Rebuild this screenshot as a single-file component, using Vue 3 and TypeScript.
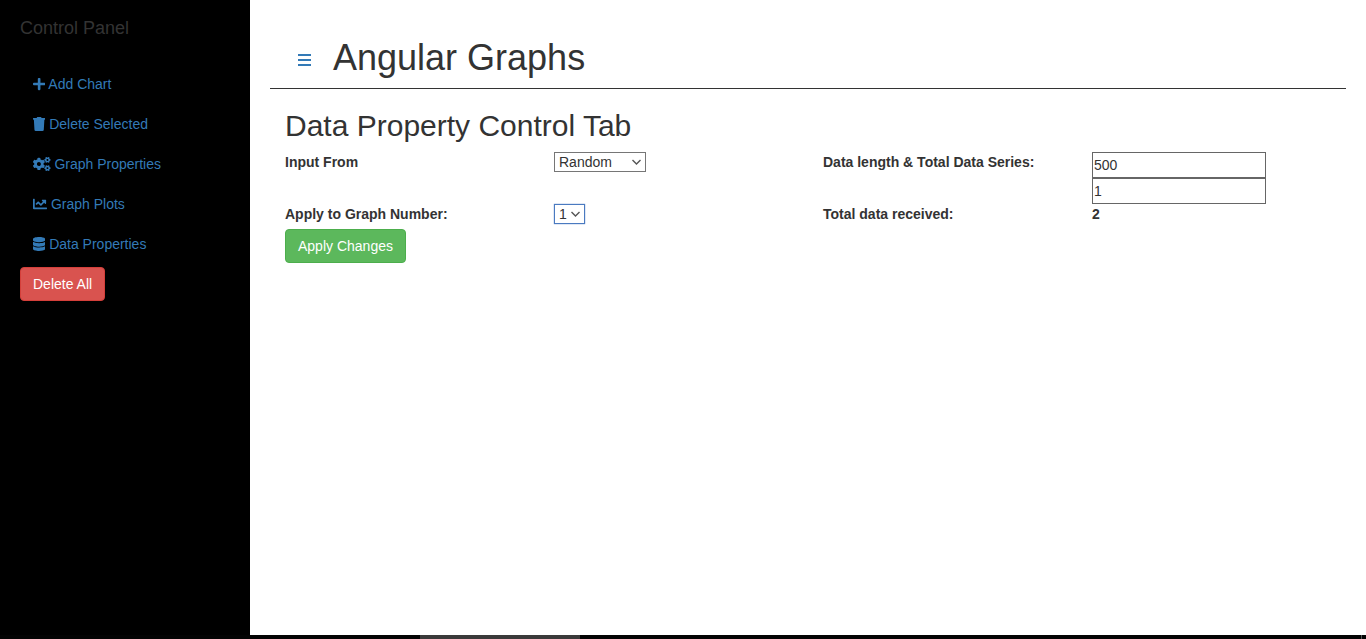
<script setup lang="ts">
import { ref } from 'vue'

interface NavItem {
  label: string
  width: number
  paths: string[]
  icon: string
}

const smallGear =
  'M512.1 191l-8.2 14.3c-3 5.3-9.4 7.5-15.1 5.4-11.8-4.4-22.6-10.7-32.1-18.6-4.6-3.8-5.8-10.5-2.8-15.7l8.2-14.3c-6.9-8-12.3-17.3-15.9-27.4h-16.5c-6 0-11.2-4.3-12.2-10.3-2-12-2.1-24.6 0-37.1 1-6 6.2-10.4 12.2-10.4h16.5c3.6-10.1 9-19.4 15.9-27.4l-8.2-14.3c-3-5.2-1.9-11.9 2.8-15.7 9.5-7.9 20.4-14.2 32.1-18.6 5.7-2.1 12.1.1 15.1 5.4l8.2 14.3c10.5-1.9 21.2-1.9 31.7 0L552 6.3c3-5.3 9.4-7.5 15.1-5.4 11.8 4.4 22.6 10.7 32.1 18.6 4.6 3.8 5.8 10.5 2.8 15.7l-8.2 14.3c6.9 8 12.3 17.3 15.9 27.4h16.5c6 0 11.2 4.3 12.2 10.3 2 12 2.1 24.6 0 37.1-1 6-6.2 10.4-12.2 10.4h-16.5c-3.6 10.1-9 19.4-15.9 27.4l8.2 14.3c3 5.2 1.9 11.9-2.8 15.7-9.5 7.9-20.4 14.2-32.1 18.6-5.7 2.1-12.1-.1-15.1-5.4l-8.2-14.3c-10.4 1.9-21.2 1.9-31.7 0zm-10.5-58.8c38.5 29.6 82.4-14.3 52.8-52.8-38.5-29.7-82.4 14.3-52.8 52.8z'
const largeGear =
  'M386.3 286.1l33.7 16.8c10.1 5.8 14.5 18.1 10.5 29.1-8.9 24.2-26.4 46.4-42.6 65.8-7.4 8.9-20.2 11.1-30.3 5.3l-29.1-16.8c-16 13.7-34.6 24.6-54.9 31.7v33.6c0 11.6-8.3 21.6-19.7 23.6-24.6 4.2-50.4 4.4-75.9 0-11.5-2-20-11.9-20-23.6V418c-20.3-7.2-38.9-18-54.9-31.7L74 403c-10 5.8-22.9 3.6-30.3-5.3-16.2-19.4-33.3-41.6-42.2-65.7-4-10.9.4-23.2 10.5-29.1l33.3-16.8c-3.9-20.9-3.9-42.4 0-63.4L12 205.8c-10.1-5.8-14.6-18.1-10.5-29 8.9-24.2 26-46.4 42.2-65.8 7.4-8.9 20.2-11.1 30.3-5.3l29.1 16.8c16-13.7 34.6-24.6 54.9-31.7V57.1c0-11.5 8.2-21.5 19.6-23.5 24.6-4.2 50.5-4.4 76-.1 11.5 2 20 11.9 20 23.6v33.6c20.3 7.2 38.9 18 54.9 31.7l29.1-16.8c10-5.8 22.9-3.6 30.3 5.3 16.2 19.4 33.2 41.6 42.1 65.8 4 10.9.1 23.2-10 29.1l-33.7 16.8c3.9 21 3.9 42.5 0 63.5zm-117.6 21.1c59.2-77-28.7-164.9-105.7-105.7-59.2 77 28.7 164.9 105.7 105.7z'

const navItems: NavItem[] = [
  {
    label: 'Add Chart',
    icon: 'plus',
    width: 448,
    paths: [
      'M416 208H272V64c0-17.67-14.33-32-32-32h-32c-17.67 0-32 14.33-32 32v144H32c-17.67 0-32 14.33-32 32v32c0 17.67 14.33 32 32 32h144v144c0 17.67 14.33 32 32 32h32c17.67 0 32-14.33 32-32V304h144c17.67 0 32-14.33 32-32v-32c0-17.67-14.33-32-32-32z',
    ],
  },
  {
    label: 'Delete Selected',
    icon: 'trash',
    width: 448,
    paths: [
      'M432 32H312l-9.4-18.7A24 24 0 0 0 281.1 0H166.8a23.72 23.72 0 0 0-21.4 13.3L136 32H16A16 16 0 0 0 0 48v32a16 16 0 0 0 16 16h416a16 16 0 0 0 16-16V48a16 16 0 0 0-16-16zM53.2 467a48 48 0 0 0 47.9 45h245.8a48 48 0 0 0 47.9-45L416 96H32z',
    ],
  },
  { label: 'Graph Properties', icon: 'cogs', width: 640, paths: [largeGear, smallGear] },
  {
    label: 'Graph Plots',
    icon: 'chart',
    width: 512,
    paths: [
      'M496 384H64V80c0-8.84-7.16-16-16-16H16C7.16 64 0 71.16 0 80v336c0 17.67 14.33 32 32 32h464c8.84 0 16-7.16 16-16v-32c0-8.84-7.16-16-16-16zM464 96H345.94c-21.38 0-32.09 25.85-16.97 40.97l32.4 32.4L288 242.75l-73.37-73.37c-12.5-12.5-32.76-12.5-45.25 0l-68.69 68.69c-6.25 6.25-6.25 16.38 0 22.63l22.62 22.62c6.25 6.25 16.38 6.25 22.63 0L192 237.25l73.37 73.37c12.5 12.5 32.76 12.5 45.25 0l96-96 32.4 32.4c15.12 15.12 40.97 4.41 40.97-16.97V112c.01-8.84-7.15-16-15.99-16z',
    ],
  },
  {
    label: 'Data Properties',
    icon: 'database',
    width: 448,
    paths: [
      'M448 73.143v45.714C448 159.143 347.667 192 224 192S0 159.143 0 118.857V73.143C0 32.857 100.333 0 224 0s224 32.857 224 73.143zM448 176v102.857C448 319.143 347.667 352 224 352S0 319.143 0 278.857V176c48.125 33.143 136.208 48.572 224 48.572S399.874 209.143 448 176zm0 160v102.857C448 479.143 347.667 512 224 512S0 479.143 0 438.857V336c48.125 33.143 136.208 48.572 224 48.572S399.874 369.143 448 336z',
    ],
  },
]

const source = ref('Random')
const graphNumber = ref('1')
const dataLength = ref('500')
const seriesCount = ref('1')
const received = ref(2)
</script>

<template>
  <div class="page">
    <div class="body">
      <aside class="sidebar">
        <h4 class="panel-title">Control Panel</h4>
        <nav class="nav">
          <a v-for="item in navItems" :key="item.icon" class="nav-link" href="#">
            <svg class="icon" :class="item.icon" :viewBox="`0 0 ${item.width} 512`" aria-hidden="true">
              <path v-for="d in item.paths" :key="d" :d="d" />
              <path v-if="item.icon === 'cogs'" :d="smallGear" transform="translate(0 301)" />
            </svg>
            {{ item.label }}
          </a>
        </nav>
        <button class="btn danger" type="button">Delete All</button>
      </aside>

      <main class="content">
        <header class="header">
          <button class="menu" type="button" aria-label="Toggle menu">
            <svg class="bars" viewBox="0 0 13 12" aria-hidden="true">
              <path d="M0 1h13M0 6h13M0 11h13" />
            </svg>
          </button>
          <h1>Angular Graphs</h1>
        </header>

        <form class="form" @submit.prevent>
          <h2>Data Property Control Tab</h2>
          <div class="fields">
            <label for="source">Input From</label>
            <div>
              <span class="select-box">
                <select id="source" v-model="source" class="wide">
                  <option>Random</option>
                </select>
                <svg class="chevron" viewBox="0 0 9 6" aria-hidden="true"><path d="M.5 1l4 4 4-4" /></svg>
              </span>
            </div>
            <label for="length">Data length &amp; Total Data Series:</label>
            <div class="stack">
              <input id="length" v-model="dataLength" type="text" />
              <input v-model="seriesCount" type="text" aria-label="Total data series" />
            </div>
            <label for="graph">Apply to Graph Number:</label>
            <div>
              <span class="select-box">
                <select id="graph" v-model="graphNumber" class="narrow">
                  <option>1</option>
                </select>
                <svg class="chevron" viewBox="0 0 9 6" aria-hidden="true"><path d="M.5 1l4 4 4-4" /></svg>
              </span>
            </div>
            <label for="received">Total data received:</label>
            <output id="received">{{ received }}</output>
          </div>
          <button class="btn success" type="submit">Apply Changes</button>
        </form>
      </main>
    </div>
    <div class="strip"><span class="thumb"></span><span class="tick"></span></div>
  </div>
</template>

<style>
body {
  margin: 0;
  background: #fff;
}
</style>

<style scoped>
* {
  box-sizing: border-box;
}
.page {
  display: flex;
  flex-direction: column;
  min-height: 100vh;
  font-family: "Liberation Sans", Arial, sans-serif;
  font-size: 14px;
  line-height: 20px;
  color: #333;
}
.body {
  flex: 1;
  display: flex;
}
.sidebar {
  flex: 0 0 250px;
  padding: 18px 20px;
  background: #000;
}
h1,
h2,
h4 {
  margin: 0;
  font-weight: 400;
}
.panel-title {
  margin-bottom: 26px;
  font-size: 18px;
  line-height: 20px;
}
.nav {
  display: flex;
  flex-direction: column;
}
.nav-link {
  padding: 10px 13px;
  color: #337ab7;
  text-decoration: none;
}
.icon {
  height: 14px;
  vertical-align: -2px;
  fill: currentColor;
}
.btn {
  display: block;
  padding: 6px 12px;
  border: 1px solid;
  border-radius: 4px;
  font: inherit;
  color: #fff;
}
.danger {
  margin-top: 3px;
  background: #d9534f;
  border-color: #d43f3a;
}
.success {
  background: #5cb85c;
  border-color: #4cae4c;
}
.content {
  flex: 1;
  min-width: 0;
  padding: 38px 20px 20px;
}
.header {
  display: flex;
  align-items: center;
  gap: 9px;
  padding: 0 15px 10px;
  border-bottom: 1px solid #333;
}
.menu {
  display: flex;
  padding: 16px 13px 12px;
  border: 0;
  background: none;
  color: #337ab7;
}
.bars {
  width: 13px;
  height: 12px;
  fill: none;
  stroke: currentColor;
  stroke-width: 2;
}
h1 {
  font-size: 36px;
  line-height: 40px;
}
.form {
  padding-top: 20px;
}
h2 {
  margin: 0 15px 10px;
  font-size: 30px;
  line-height: 33px;
}
.fields {
  display: grid;
  grid-template-columns: repeat(4, 1fr);
}
.fields > * {
  padding: 0 15px;
}
label,
output {
  font-weight: 700;
}
.form > .btn {
  margin: 5px 15px 0;
}
.select-box {
  position: relative;
  display: inline-flex;
  vertical-align: top;
}
select {
  appearance: none;
  height: 20px;
  padding: 0 4px;
  border: 1px solid #767676;
  border-radius: 0;
  outline: 0;
  background: #fff;
  font: inherit;
  line-height: 18px;
  color: #333;
}
.wide {
  width: 92px;
}
.narrow {
  width: 31px;
  border-color: #4a7ac0;
  box-shadow: 0 0 1px #4a7ac0;
}
.chevron {
  position: absolute;
  right: 5px;
  top: 7px;
  width: 9px;
  height: 6px;
  fill: none;
  stroke: #555;
  stroke-width: 1.4;
  pointer-events: none;
}
.stack {
  display: flex;
  flex-direction: column;
}
input {
  width: 174px;
  max-width: 100%;
  height: 26px;
  padding: 1px;
  border: 1px solid #666;
  border-radius: 0;
  background: #fff;
  font: inherit;
  color: #333;
}
.strip {
  display: flex;
  height: 4px;
  padding-left: 420px;
  padding-right: 4px;
  background: #030303;
}
.thumb {
  width: 160px;
  background: #3a3a3a;
}
.tick {
  width: 1px;
  margin-left: auto;
  background: #555;
}
</style>
